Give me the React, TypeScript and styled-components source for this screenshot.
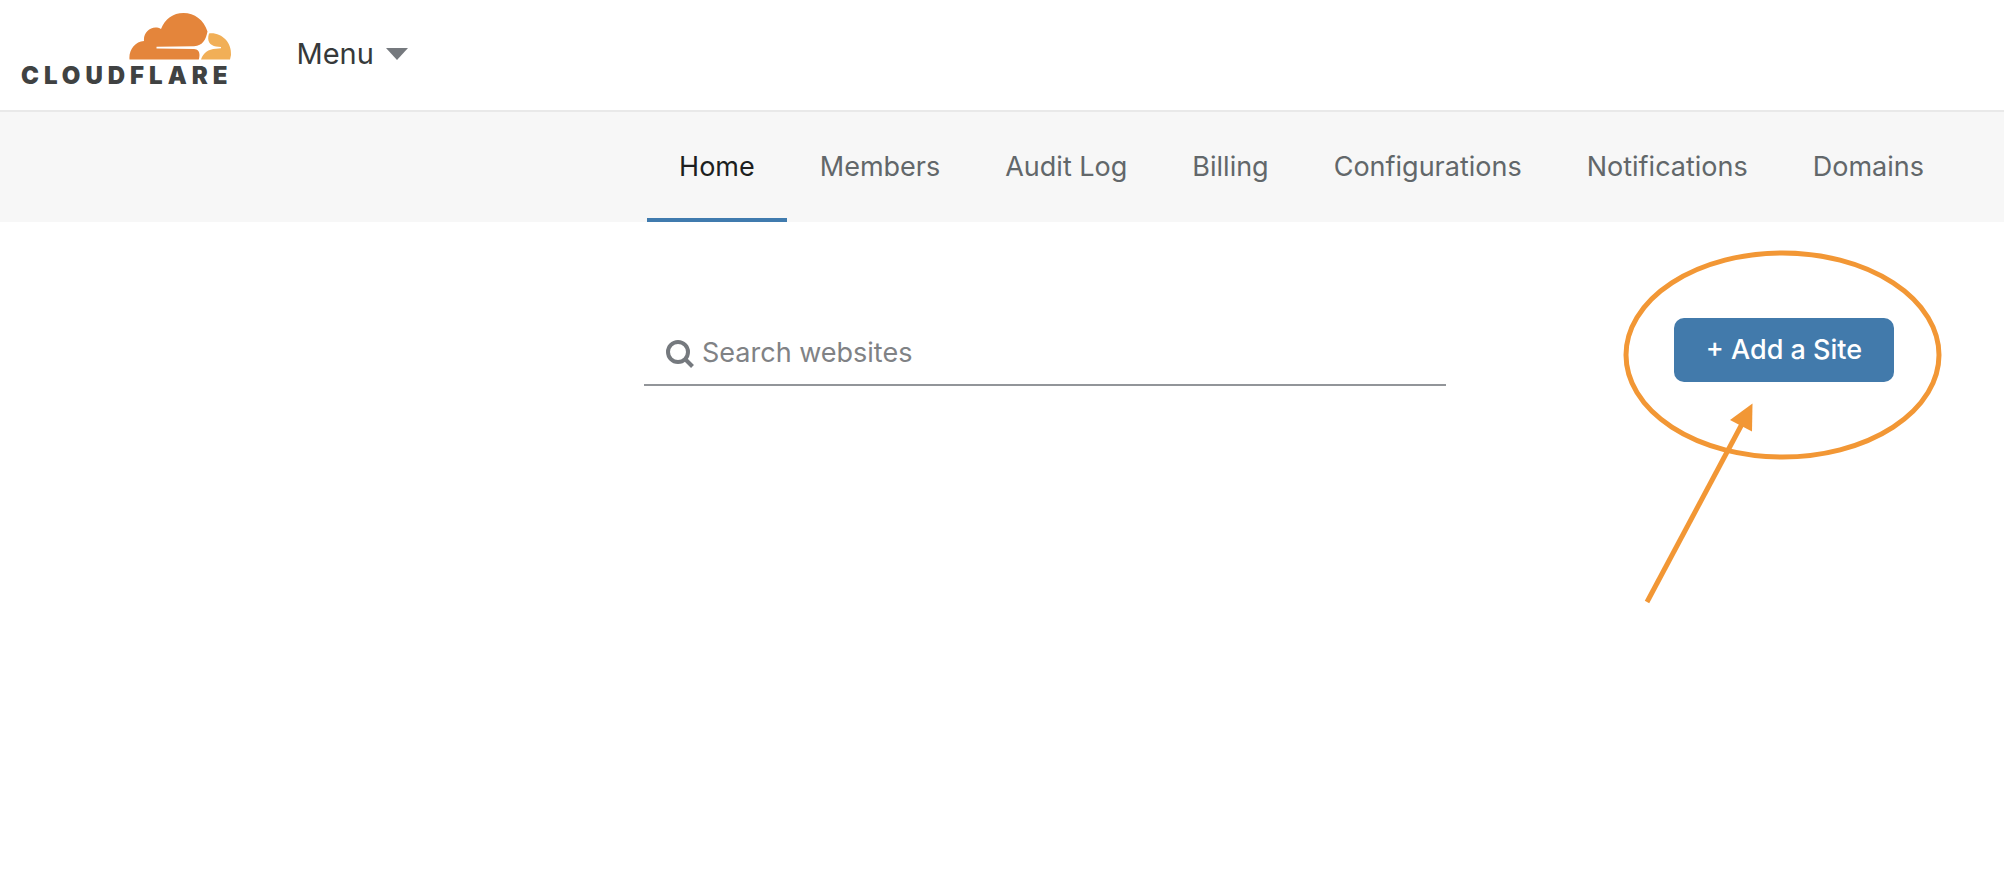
import React from "react";
import styled, { createGlobalStyle } from "styled-components";

const GlobalStyle = createGlobalStyle`
  *, *::before, *::after { box-sizing: border-box; }
  body {
    margin: 0;
    background: #fff;
    color: #36393a;
    font-family: Inter, Roboto, sans-serif;
    font-size: 27px;
    line-height: 32px;
  }
`;

const Header = styled.header`
  display: flex;
  align-items: center;
  gap: 64px;
  height: 112px;
  padding: 0 21px 2px;
  border-bottom: 2px solid #e9e9e9;
`;

const LogoLink = styled.a`
  display: flex;
  flex-direction: column;
  align-items: flex-end;
  gap: 4px;
  padding-bottom: 8px;
  color: #404242;
  text-decoration: none;
`;

const Wordmark = styled.span`
  font-size: 24px;
  line-height: 24px;
  font-weight: 900;
  letter-spacing: 5px;
`;

const MenuButton = styled.button`
  display: flex;
  align-items: center;
  gap: 12px;
  padding: 0;
  border: 0;
  background: none;
  color: #36393a;
  font: inherit;
  font-size: 29px;
`;

const Tabs = styled.nav`
  display: flex;
  justify-content: flex-end;
  gap: 1px;
  height: 110px;
  padding: 0 48px;
  background: #f7f7f7;
`;

const Tab = styled.a<{ $active?: boolean }>`
  display: flex;
  align-items: center;
  padding: 4px 32px 0;
  border-bottom: 4px solid ${(p) => (p.$active ? "#407bae" : "transparent")};
  color: ${(p) => (p.$active ? "#1d1f20" : "#62676a")};
  text-decoration: none;
  white-space: nowrap;
`;

const Main = styled.main`
  display: flex;
  justify-content: flex-end;
  align-items: flex-start;
  gap: 228px;
  padding: 96px 110px 300px;
`;

const SearchBox = styled.label`
  display: flex;
  align-items: center;
  gap: 8px;
  width: 802px;
  height: 68px;
  padding: 4px 21px 0;
  border-bottom: 2px solid #929599;
`;

const SearchInput = styled.input`
  flex: 1;
  min-width: 0;
  padding: 0;
  border: 0;
  outline: 0;
  background: none;
  color: #36393a;
  font: inherit;
  &::placeholder { color: #808285; opacity: 1; }
`;

const AddSite = styled.div`
  position: relative;
  flex: none;
`;

const AddButton = styled.button`
  width: 220px;
  height: 64px;
  padding: 0;
  border: 0;
  border-radius: 10px;
  background: #427aab;
  color: #fff;
  font: inherit;
  font-weight: 500;
  white-space: nowrap;
`;

const Callout = styled.svg`
  position: absolute;
  top: -70px;
  left: -54px;
  pointer-events: none;
`;

const tabs = ["Home", "Members", "Audit Log", "Billing", "Configurations", "Notifications", "Domains"];

const Cloud = () => (
  <svg width="104" height="48" viewBox="0 0 104 48" aria-hidden="true">
    <path
      fill="#e4853b"
      d="M.5 47.5C-.5 38 6 29.500 15 29C14 19 24 12.500 32 17C36 7 44 1 54.500 1C65.500 1 75 8 78.500 19.500C77 27 74 34 65 34.200L27.500 34.800V36.400L65 36.900C70 37 71.500 41 69.800 47.500Z"
    />
    <path
      fill="#f1af57"
      d="M80 21.500C92 20 103 30 102 43L101 47.500H72C74.500 40.500 79 37.200 87 36.700L92 36.300V35L87 34.500C81 33.500 77.500 29 80 21.500Z"
    />
  </svg>
);

const SearchIcon = () => (
  <svg width="29" height="32" viewBox="0 0 29 32" fill="none" stroke="#75797e" strokeWidth="4" aria-hidden="true">
    <circle cx="13" cy="15" r="10" />
    <path d="M19.500 21.500L27.500 29.500" />
  </svg>
);

export default function App() {
  return (
    <>
      <GlobalStyle />
      <Header>
        <LogoLink href="#">
          <Cloud />
          <Wordmark>CLOUDFLARE</Wordmark>
        </LogoLink>
        <MenuButton type="button">
          Menu
          <svg width="22" height="12" viewBox="0 0 22 12" aria-hidden="true">
            <path fill="#75797e" d="M0 0H22L11 12Z" />
          </svg>
        </MenuButton>
      </Header>
      <Tabs>
        {tabs.map((name) => (
          <Tab key={name} href="#" $active={name === "Home"}>
            {name}
          </Tab>
        ))}
      </Tabs>
      <Main>
        <SearchBox>
          <SearchIcon />
          <SearchInput type="text" placeholder="Search websites" aria-label="Search websites" />
        </SearchBox>
        <AddSite>
          <AddButton type="button">+ Add a Site</AddButton>
          <Callout width="330" height="360" viewBox="0 0 330 360" aria-hidden="true">
            <ellipse cx="162.500" cy="107" rx="156.500" ry="102" fill="none" stroke="#f29735" strokeWidth="5" />
            <path d="M27 354L122 176" stroke="#f29735" strokeWidth="5" />
            <path d="M132.500 155.500L110 172L132 183.500Z" fill="#f29735" />
          </Callout>
        </AddSite>
      </Main>
    </>
  );
}
